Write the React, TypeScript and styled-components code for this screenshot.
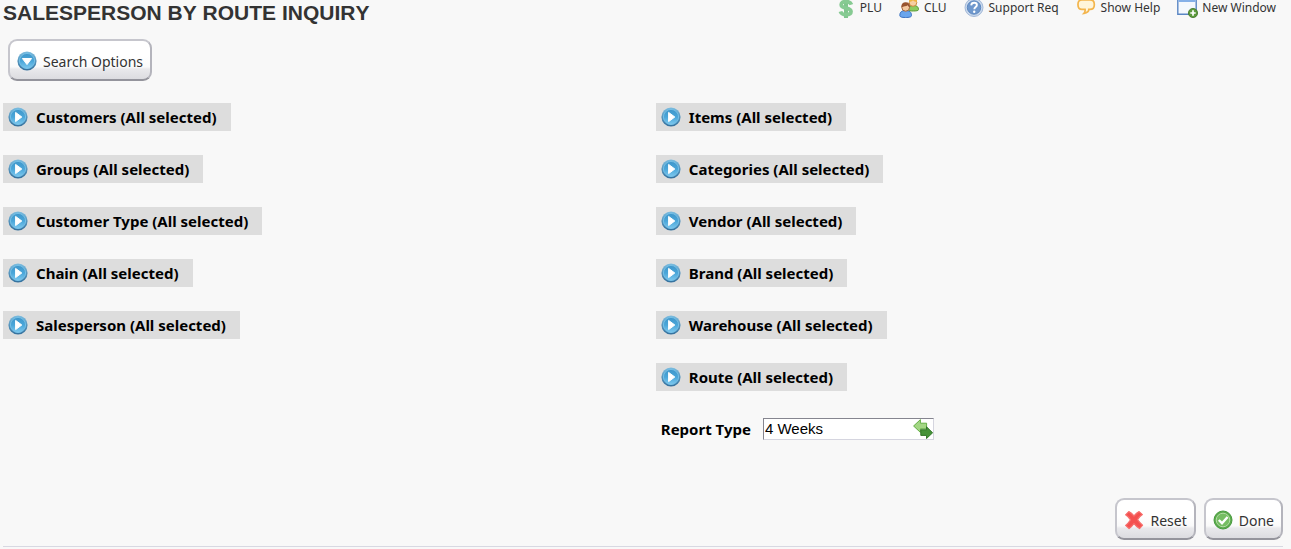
import React from "react";
import styled, { createGlobalStyle } from "styled-components";

const GlobalStyle = createGlobalStyle`
  *, *::before, *::after { box-sizing: border-box; }
  body {
    margin: 0;
    background: #f8f8f8;
    color: #000;
    font-family: "Noto Sans", sans-serif;
  }
`;

const Page = styled.div`
  padding: 0 8px 0 3px;
`;

const Header = styled.header`
  display: flex;
  justify-content: space-between;
  align-items: flex-start;
  height: 39px;
`;

const Title = styled.h1`
  margin: 0;
  font: bold 21px/25px "Liberation Sans", Arial, sans-serif;
  font-kerning: none;
  color: #333;
  white-space: nowrap;
`;

const Toolbar = styled.nav`
  display: flex;
  gap: 17px;
  padding-right: 7px;
`;

const ToolLink = styled.a<{ $gap?: number }>`
  display: flex;
  gap: ${(p) => p.$gap ?? 5}px;
  font-size: 12px;
  line-height: 16px;
  color: #333;
  text-decoration: none;
  white-space: nowrap;

  svg {
    flex: none;
    margin-top: -2px;
  }
`;

const PushButton = styled.button`
  display: inline-flex;
  align-items: center;
  gap: 6px;
  height: 42px;
  padding: 2px 7px 0;
  border: 2px solid #c6c6cd;
  border-bottom-color: #94949c;
  border-right-color: #b4b4bc;
  border-radius: 9px;
  background: linear-gradient(#fff 0, #fff 40%, #fafafa 68%, #e9e9ec 74%, #dcdce0 100%);
  font: 14px/20px "Noto Sans", sans-serif;
  color: #333;
  white-space: nowrap;
  cursor: pointer;

  svg { flex: none; }
`;

const ButtonText = styled.span`
  padding-top: 2px;
`;

const SearchBar = styled.div`
  display: flex;
  padding-left: 5px;
`;

const Filters = styled.main`
  display: grid;
  grid-template-columns: 51% 49%;
  align-items: start;
  padding-top: 22px;
`;

const FilterColumn = styled.section`
  display: flex;
  flex-direction: column;
  align-items: flex-start;
  gap: 24px;
`;

const FilterButton = styled.button`
  display: flex;
  align-items: center;
  gap: 8px;
  height: 28px;
  padding: 0 14px 0 5px;
  border: 0;
  background: #ddd;
  font: bold 15px/20px "Noto Sans", sans-serif;
  color: #000;
  white-space: nowrap;
  cursor: pointer;
`;

const ReportRow = styled.div`
  display: flex;
  align-items: center;
  gap: 12px;
  padding-left: 5px;
  margin-top: 3px;
`;

const ReportLabel = styled.label`
  font: bold 15px/22px "Noto Sans", sans-serif;
`;

const PickerField = styled.div`
  display: flex;
  align-items: center;
  width: 171px;
  height: 22px;
  border: 1px solid #d5d5df;
  border-top-color: #85858f;
  border-left-color: #85858f;
  background: #fff;
`;

const PickerInput = styled.input`
  flex: 1;
  min-width: 0;
  height: 20px;
  padding: 0 1px;
  border: 0;
  outline: 0;
  background: transparent;
  font: 15px/20px "Liberation Sans", Arial, sans-serif;
  color: #000;
`;

const PickerButton = styled.button`
  display: flex;
  padding: 0;
  border: 0;
  background: none;
  cursor: pointer;
`;

const Footer = styled.footer`
  display: flex;
  justify-content: flex-end;
  gap: 8px;
  margin-top: 58px;
  padding-bottom: 6px;
  border-bottom: 1px solid #d8d8e2;
`;

const Defs = styled.svg`
  position: absolute;
`;

const SharedGradients = () => (
  <Defs width="0" height="0" aria-hidden="true">
    <defs>
      <linearGradient id="orb" x1="0" y1="0" x2="0" y2="1">
        <stop offset="0" stopColor="#3f96ca" />
        <stop offset="0.5" stopColor="#4aa6d9" />
        <stop offset="1" stopColor="#7cc8ee" />
      </linearGradient>
      <linearGradient id="rim" x1="0" y1="0" x2="0" y2="1">
        <stop offset="0" stopColor="#7cbde0" />
        <stop offset="1" stopColor="#326f9c" />
      </linearGradient>
    </defs>
  </Defs>
);

const OrbIcon = ({ down = false }: { down?: boolean }) => (
  <svg width="20" height="20" viewBox="0 0 20 20" aria-hidden="true">
    <circle cx="10" cy="10" r="9.6" fill="url(#rim)" />
    <circle cx="10" cy="10" r="7.6" fill="url(#orb)" stroke="#74bfe6" strokeWidth="1" />
    <path
      d={down ? "M5.400 7.500h9.200L10 13.600z" : "M7.600 5.400v9.200L13.800 10z"}
      fill="#fff"
      stroke="#fff"
      strokeWidth="1"
      strokeLinejoin="round"
    />
  </svg>
);

const DollarIcon = () => (
  <svg width="16" height="20" viewBox="0 0 16 20" aria-hidden="true">
    <path d="M8 0v20" stroke="#7fc58c" strokeWidth="4" />
    <path
      d="M13.4 6.6C12.6 4.2 10.6 3.6 8 3.6c-3 0-4.8 1.2-4.8 3.2 0 2.2 2 2.7 4.8 3.3 3 .6 5 1.2 5 3.4 0 2-2 3.2-5 3.2-2.900 0-4.800-.9-5.600-3.200"
      fill="none"
      stroke="#86ca92"
      strokeWidth="3.800"
    />
  </svg>
);

const UsersIcon = () => (
  <svg width="20" height="20" viewBox="0 0 20 20" aria-hidden="true">
    <path d="M9.500 12c0-3 1.500-4.500 5-4.500s5 1.500 5 4c0 1.200-2 1.500-5 1.500s-5 0-5-1z" fill="#8ccb5e" stroke="#5a9c3a" />
    <circle cx="14" cy="4.500" r="3.800" fill="#f6cfa2" stroke="#c98a3c" />
    <path d="M10 4c0-3 1.500-4.500 4-4.500s4 1.500 4 4.500c-2-.2-3-.8-4-1.800-1 1.200-2.500 1.600-4 1.800z" fill="#f0b441" />
    <path d="M.8 17.500c0-3.600 2-5 5.700-5s6 1.400 6 5c0 1.500-2.200 2-6 2s-5.700-.5-5.700-2z" fill="#6aa5ec" stroke="#3c72c0" />
    <circle cx="6.700" cy="9.300" r="3.900" fill="#f4c8a0" stroke="#a3643c" />
    <path d="M2.400 9.200c-.2-3.400 1.500-5 4.300-5s4.500 1.600 4.300 5c-1.200-.3-1.800-1-2.300-2-1.500 1.200-4 1-6.300 2z" fill="#98532f" />
  </svg>
);

const QuestionIcon = () => (
  <svg width="20" height="20" viewBox="0 0 20 20" aria-hidden="true">
    <circle cx="10" cy="9.500" r="9" fill="#c9d8ec" stroke="#a3b9d8" />
    <circle cx="10" cy="9.500" r="6.700" fill="#6f98cd" stroke="#5f89c0" />
    <path d="M7.200 7.300c.2-1.800 1.300-2.500 2.900-2.500s2.800.9 2.800 2.300c0 2-2.600 2-2.600 4.200" fill="none" stroke="#fff" strokeWidth="1.900" />
    <circle cx="10.200" cy="13.700" r="1.200" fill="#fff" />
  </svg>
);

const BubbleIcon = () => (
  <svg width="20" height="20" viewBox="0 0 20 20" aria-hidden="true">
    <path
      d="M6 1.800h8c3 0 4.300 1.800 4.300 4.200v1c0 2.600-1.500 4.400-4.300 4.400h-1.200c.1 1.900-1.300 3.300-4.800 3.900 1.100-1.200 1.300-2.400 1.100-3.900H6C3.300 11.400 2 9.600 2 7V6c0-2.400 1.300-4.200 4-4.200z"
      fill="#fff5da"
      stroke="#f3b54d"
      strokeWidth="1.700"
    />
  </svg>
);

const WindowIcon = () => (
  <svg width="21" height="20" viewBox="0 0 21 20" aria-hidden="true">
    <path d="M.8 0h18.400v16.200H.8z" fill="#f4f8fd" stroke="#5a86c4" strokeWidth="1.400" />
    <path d="M1.500 0h17v4h-17z" fill="#85b0e8" />
    <circle cx="16" cy="15" r="4.600" fill="#5d9a3c" stroke="#3d7427" strokeWidth=".8" />
    <path d="M16 12.300v5.400M13.300 15h5.400" stroke="#fff" strokeWidth="1.700" />
  </svg>
);

const SwapIcon = () => (
  <svg width="20" height="20" viewBox="0 0 20 20" aria-hidden="true">
    <path d="M.6 7 7.400.6v3.600h6.200v5.600H7.400v3.600z" fill="#a3d684" stroke="#65ae45" />
    <path d="M19.600 13.800 13.500 19.600v-3.200H7.800v-5.600h5.700V7.800z" fill="#459238" stroke="#32762a" />
  </svg>
);

const CrossIcon = () => (
  <svg width="20" height="20" viewBox="0 0 20 20" aria-hidden="true">
    <path
      d="M1.600 4.800 4.800 1.600c2 1 3.700 2.600 5.200 4.400 1.500-1.800 3.200-3.400 5.100-4.400L18.400 4.600c-2 1.400-3.600 3-4.900 5 1.400 2 3.200 4 5.100 5.600L15.500 18.600c-2-1.300-4-3-5.500-4.900-1.500 1.900-3.200 3.700-4.900 4.900L1.600 15.400c2-1.400 3.600-3.500 5-5.600C5.300 7.800 3.600 6.100 1.600 4.800z"
      fill="#f4504f"
      stroke="#f66f6d"
      strokeWidth="1.200"
      strokeLinejoin="round"
    />
  </svg>
);

const CheckIcon = () => (
  <svg width="20" height="20" viewBox="0 0 20 20" aria-hidden="true">
    <circle cx="10" cy="10" r="9" fill="#59a94a" stroke="#489b3f" />
    <circle cx="10" cy="10" r="6.800" fill="#75bd62" stroke="#b4dda6" />
    <path d="m5.800 10 3.200 3.200 5.600-6.200" fill="none" stroke="#fff" strokeWidth="2.400" />
  </svg>
);

const customerFilters = ["Customers", "Groups", "Customer Type", "Chain", "Salesperson"];
const itemFilters = ["Items", "Categories", "Vendor", "Brand", "Warehouse", "Route"];

const Filter = ({ name }: { name: string }) => (
  <FilterButton type="button" aria-expanded="false">
    <OrbIcon />
    {name} (All selected)
  </FilterButton>
);

export default function App() {
  return (
    <>
      <GlobalStyle />
      <SharedGradients />
      <Page>
        <Header>
          <Title>SALESPERSON BY ROUTE INQUIRY</Title>
          <Toolbar aria-label="Tools">
            <ToolLink href="#plu" $gap={6}><DollarIcon />PLU</ToolLink>
            <ToolLink href="#clu"><UsersIcon />CLU</ToolLink>
            <ToolLink href="#support"><QuestionIcon />Support Req</ToolLink>
            <ToolLink href="#help"><BubbleIcon />Show Help</ToolLink>
            <ToolLink href="#window" $gap={4}><WindowIcon />New Window</ToolLink>
          </Toolbar>
        </Header>
        <SearchBar>
          <PushButton type="button"><OrbIcon down /><ButtonText>Search Options</ButtonText></PushButton>
        </SearchBar>
        <Filters>
          <FilterColumn>
            {customerFilters.map((name) => <Filter key={name} name={name} />)}
          </FilterColumn>
          <FilterColumn>
            {itemFilters.map((name) => <Filter key={name} name={name} />)}
            <ReportRow>
              <ReportLabel htmlFor="report-type">Report Type</ReportLabel>
              <PickerField>
                <PickerInput id="report-type" type="text" defaultValue="4 Weeks" />
                <PickerButton type="button" aria-label="Change report type"><SwapIcon /></PickerButton>
              </PickerField>
            </ReportRow>
          </FilterColumn>
        </Filters>
        <Footer>
          <PushButton type="reset"><CrossIcon /><ButtonText>Reset</ButtonText></PushButton>
          <PushButton type="button"><CheckIcon /><ButtonText>Done</ButtonText></PushButton>
        </Footer>
      </Page>
    </>
  );
}
